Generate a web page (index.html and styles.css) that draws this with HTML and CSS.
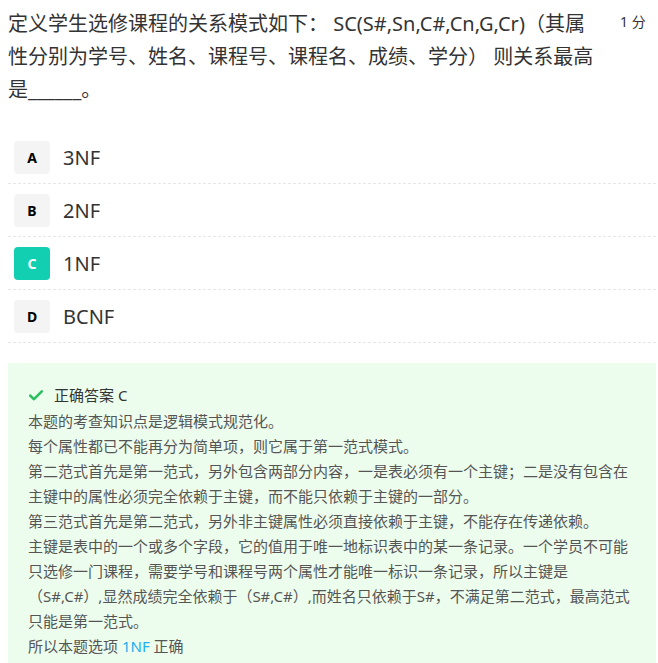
FILE: index.html
```html
<!DOCTYPE html>
<html lang="zh-CN">
<head>
<meta charset="utf-8">
<title>题目</title>
<link rel="stylesheet" href="styles.css">
</head>
<body>
<div class="page">
  <div class="question">
    <div class="q-text">定义学生选修课程的关系模式如下： SC(S#,Sn,C#,Cn,G,Cr)（其属性分别为学号、姓名、课程号、课程名、成绩、学分） 则关系最高是______。</div>
    <div class="score">1 分</div>
  </div>
  <ul class="options">
    <li class="option"><span class="letter">A</span><span class="opt-text">3NF</span></li>
    <li class="option"><span class="letter">B</span><span class="opt-text">2NF</span></li>
    <li class="option"><span class="letter letter-right">C</span><span class="opt-text">1NF</span></li>
    <li class="option"><span class="letter">D</span><span class="opt-text">BCNF</span></li>
  </ul>
  <div class="answer">
    <div class="answer-head">
      <svg class="check" width="14" height="11" viewBox="0 0 14 11"><path d="M1.2 5.6 L5 9.2 L12.8 1.4" fill="none" stroke="#2dbe60" stroke-width="2.6" stroke-linecap="round" stroke-linejoin="round"/></svg>
      <span>正确答案 C</span>
    </div>
    <p>本题的考查知识点是逻辑模式规范化。</p>
    <p>每个属性都已不能再分为简单项，则它属于第一范式模式。</p>
    <p>第二范式首先是第一范式，另外包含两部分内容，一是表必须有一个主键；二是没有包含在主键中的属性必须完全依赖于主键，而不能只依赖于主键的一部分。</p>
    <p>第三范式首先是第二范式，另外非主键属性必须直接依赖于主键，不能存在传递依赖。</p>
    <p>主键是表中的一个或多个字段，它的值用于唯一地标识表中的某一条记录。一个学员不可能只选修一门课程，需要学号和课程号两个属性才能唯一标识一条记录，所以主键是（S#,C#）,显然成绩完全依赖于（S#,C#）,而姓名只依赖于S#，不满足第二范式，最高范式只能是第一范式。</p>
    <p>所以本题选项 <span class="hl">1NF</span> 正确</p>
  </div>
</div>
</body>
</html>
```
FILE: styles.css
```css
html, body {
  margin: 0;
  padding: 0;
  background: #ffffff;
}
body {
  font-family: "Noto Sans", "Noto Sans CJK SC", sans-serif;
  color: #333333;
}
.page {
  padding: 7px 2px 0 8px;
}
.question {
  display: flex;
  align-items: flex-start;
}
.q-text {
  width: 592px;
  font-size: 20px;
  line-height: 33px;
  color: #333333;
}
.score {
  margin-left: 20px;
  font-size: 14px;
  line-height: 30px;
  color: #333333;
}
.options {
  list-style: none;
  margin: 25px 0 0 0;
  padding: 0;
}
.option {
  display: flex;
  align-items: center;
  padding: 10px 0 9px 6px;
  border-bottom: 1px dashed #e6e6e6;
}
.letter {
  width: 36px;
  height: 33px;
  border-radius: 4px;
  background: #f4f4f5;
  display: flex;
  align-items: center;
  justify-content: center;
  font-size: 14px;
  font-weight: 700;
  color: #000000;
}
.letter-right {
  background: #13cfb1;
  color: #ffffff;
}
.opt-text {
  margin-left: 13px;
  font-size: 20px;
  color: #333333;
}
.answer {
  margin-top: 20px;
  background: #edfded;
  padding: 19px 24px 6px 20px;
  font-size: 15px;
  line-height: 25px;
  color: #555555;
}
.answer-head {
  display: flex;
  align-items: center;
  height: 26px;
  margin-bottom: 1px;
  color: #333333;
}
.check {
  margin-left: 1px;
  margin-right: 11px;
}
.answer p {
  margin: 0;
}
.hl {
  color: #21aef0;
}
```
